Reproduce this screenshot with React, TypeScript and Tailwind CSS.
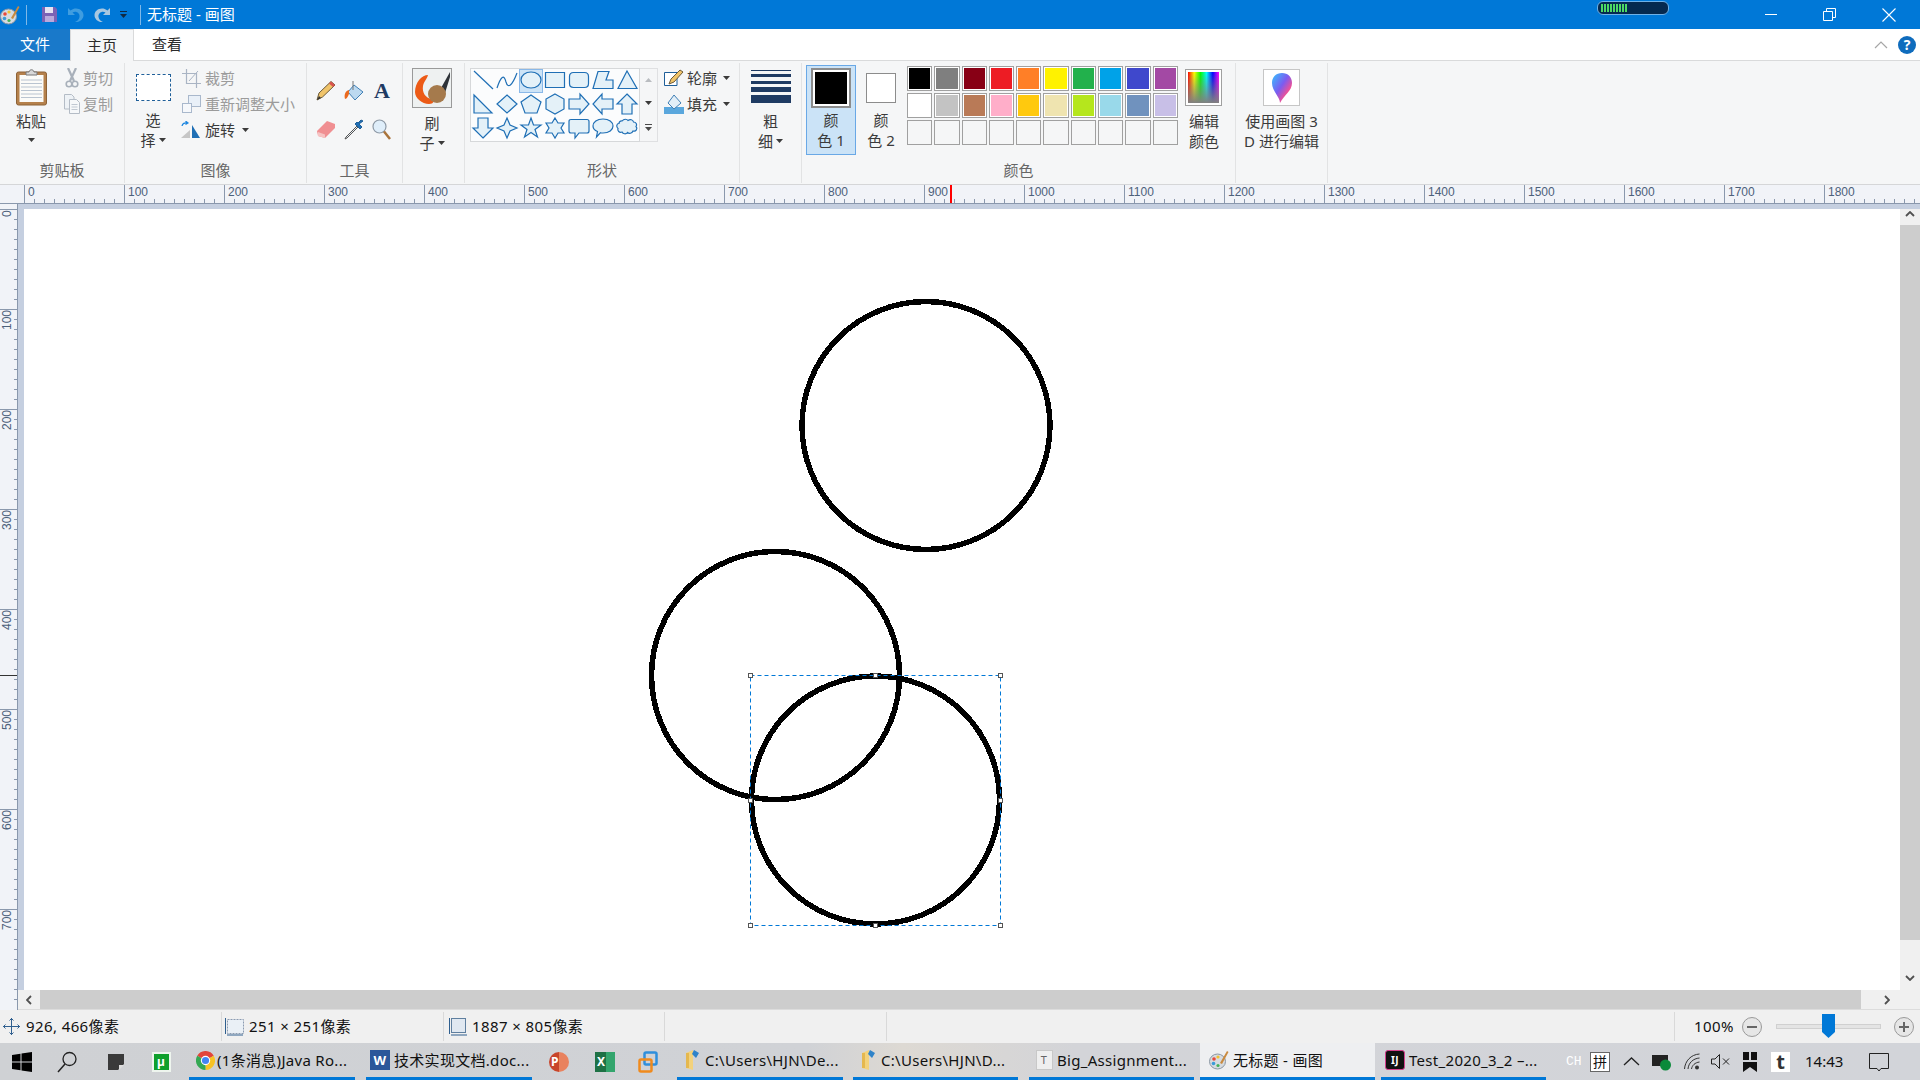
import React from 'react';

const Caret = ({ className = '' }: { className?: string }) => (
	<svg width="7" height="4" viewBox="0 0 7 4" className={className}>
		<path d="M0 0H7L3.5 4Z" fill="#3b3b3b" />
	</svg>
);

const PaintIcon = ({ size = 20 }: { size?: number }) => (
	<svg width={size} height={size} viewBox="0 0 20 20">
		<ellipse cx="8.5" cy="11.5" rx="8" ry="7.5" fill="#d6dbe0" stroke="#8a96a3" />
		<circle cx="5" cy="9" r="1.8" fill="#e8483a" />
		<circle cx="9" cy="7" r="1.6" fill="#f2c230" />
		<circle cx="4.5" cy="13.5" r="1.8" fill="#3b9bd8" />
		<circle cx="9" cy="15.5" r="1.6" fill="#45b05a" />
		<path d="M11 13L18 1L19.5 2L13 14Z" fill="#c98a3f" />
	</svg>
);

const shapes = [
	'M3 3L22 21',
	'M2 20C6 8 9 6 11 14C13 21 17 18 22 5',
	'M22 12C22 16.5 17.5 20 12 20S2 16.5 2 12S6.5 4 12 4S22 7.5 22 12Z',
	'M2.5 4.5H21.5V19.5H2.5Z',
	'M6.5 4.5H17.5Q21.5 4.5 21.5 8.5V15.5Q21.5 19.5 17.5 19.5H6.5Q2.5 19.5 2.5 15.5V8.5Q2.5 4.5 6.5 4.5Z',
	'M2 20.5L7 3.5H18L15 12H22V20.5Z',
	'M12 3L22 20.5H3Z',
	'M3 3L21 21H3Z',
	'M12 3L22 12L12 21L2 12Z',
	'M12 3L22 10L18 21H6L2 10Z',
	'M12 2L21 7V17L12 22L3 17V7Z',
	'M2 7H13V2L22 12L13 22V17H2Z',
	'M22 7H11V2L2 12L11 22V17H22Z',
	'M12 2L22 12H17V22H7V12H2Z',
	'M12 22L22 12H17V2H7V12H2Z',
	'M12 2L15 9L22 12L15 15L12 22L9 15L2 12L9 9Z',
	'M12 2L14.5 9H22L16 13.5L18.5 21L12 16.5L5.5 21L8 13.5L2 9H9.5Z',
	'M12 2L15 7H21L18 12L21 17H15L12 22L9 17H3L6 12L3 7H9Z',
	'M4 3.5H20Q22 3.5 22 5.5V15Q22 17 20 17H12L8 22V17H4Q2 17 2 15V5.5Q2 3.5 4 3.5Z',
	'M12 3C18 3 22 6 22 10S18 17 12 17Q10.5 17 9.5 16.7L5.5 21L6.5 15.5C3.5 14.3 2 12.5 2 10C2 6 6 3 12 3Z',
	'M7 5C9 2.5 12 3 13 4.5C15 3 18 3.5 18.5 6C21 6 22.5 8.5 21 10.5C23 12.5 21 16 18 15C17 17.5 14 18 12.5 16.5C11 18.5 8 18 7 16C4.5 17 2 15 3 12.5C1 11 1.5 7.5 4 7.5C4 6 5.5 4.5 7 5Z',
];

const row1 = ['#000000', '#7f7f7f', '#880015', '#ed1c24', '#ff7f27', '#fff200', '#22b14c', '#00a2e8', '#3f48cc', '#a349a4'];
const row2 = ['#ffffff', '#c3c3c3', '#b97a57', '#ffaec9', '#ffc90e', '#efe4b0', '#b5e61d', '#99d9ea', '#7092be', '#c8bfe7'];
const rulerH = Array.from({ length: 19 }, (_, i) => i * 100);
const rulerV = Array.from({ length: 8 }, (_, i) => i * 100);
const tenTicks = Array.from({ length: 9 }, (_, i) => i);

const Group = ({ width, label, children }: { width: string; label?: string; children: React.ReactNode }) => (
	<div className={`${width} h-[120px] flex flex-col shrink-0 border-r border-[#e2e3e4]`}>
		<div className="h-[97px] flex">{children}</div>
		<div className="h-[21px] text-center text-[15px] leading-[21px] text-[#666666]">{label}</div>
	</div>
);

const BigLabel = ({ a, b, arrow = true }: { a: string; b: string; arrow?: boolean }) => (
	<div className="flex flex-col items-center text-[15px] leading-[20px] text-[#3b3b3b]">
		<span>{a}</span>
		<span className="flex items-center gap-[3px]">
			{b}
			{arrow && <Caret />}
		</span>
	</div>
);

const SmallRow = ({ icon, text, grey = false, arrow = false, gap }: { icon: React.ReactNode; text: string; grey?: boolean; arrow?: boolean; gap: string }) => (
	<div className={`h-[26px] flex items-center text-[15px] ${gap} ${grey ? 'text-[#9b9b9b]' : 'text-[#3b3b3b]'}`}>
		<span className="w-[20px] h-[20px] flex items-center justify-center shrink-0">{icon}</span>
		<span>{text}</span>
		{arrow && <Caret className="ml-[3px]" />}
	</div>
);

const Task = ({ width, ml, pl, gap = 'gap-[4px]', active = false, icon, text }: { width: string; ml: string; pl: string; gap?: string; active?: boolean; icon: React.ReactNode; text: string }) => (
	<div className={`${width} ${ml} ${pl} ${gap} h-full shrink-0 flex items-center border-b-[3px] border-[#0078d7] text-[15px] tracking-[0.3px] text-[#111111] whitespace-nowrap ${active ? 'bg-[#eeeff1]' : ''}`}>
		<span className="w-[20px] h-[20px] shrink-0 flex items-center justify-center">{icon}</span>
		<span>{text}</span>
	</div>
);

const FolderIcon = () => (
	<svg width="20" height="22" viewBox="0 0 20 22">
		<path d="M3 4L10 1V21L3 19Z" fill="#f3d27c" />
		<path d="M3 4H6V19H3Z" fill="#e5b84f" />
		<path d="M11 1L16 4L13 9L9 5Z" fill="#2f83c9" />
	</svg>
);

const App = () => {
	return (
		<div className="w-[1920px] h-[1080px] overflow-hidden flex flex-col bg-white font-['Noto_Sans','Noto_Sans_CJK_SC',sans-serif]">
			{/* title bar */}
			<div className="h-[29px] shrink-0 bg-[#0078d7] flex items-center text-white">
				<span className="w-[20px] flex"><PaintIcon /></span>
				<span className="ml-[6px] w-px h-[20px] bg-[#7fb8e8]" />
				<svg width="17" height="17" viewBox="0 0 17 17" className="ml-[14px]">
					<path d="M1 1H14L16 3V16H1Z" fill="#7b62b5" />
					<path d="M4 1H12V7H4Z" fill="#e6e3f2" />
					<path d="M4 10H13V16H4Z" fill="#b9a9dc" />
				</svg>
				<svg width="17" height="18" viewBox="0 0 17 18" className="ml-[9px]">
					<path d="M1 2V9H8L5.5 6.5C9 4.5 13 7 12.5 11C12.2 13.500 10 15.500 8 16C13 16.500 16.500 13 16.500 9C16.500 3.500 9 0 3.500 4.500Z" fill="#3f9de0" />
				</svg>
				<svg width="17" height="18" viewBox="0 0 17 18" className="ml-[10px]">
					<path d="M16 2V9H9L11.500 6.500C8 4.500 4 7 4.500 11C4.800 13.500 7 15.500 9 16C4 16.500 0.500 13 0.500 9C0.500 3.500 8 0 13.500 4.500Z" fill="#a9c7e0" />
				</svg>
				<svg width="7" height="8" viewBox="0 0 7 8" className="ml-[9px]">
					<path d="M0 0H7V1H0ZM0 3H7L3.500 7Z" fill="#102a43" />
				</svg>
				<span className="ml-[13px] w-px h-[20px] bg-[#7fb8e8]" />
				<span className="ml-[6px] text-[15px]">无标题 - 画图</span>
				<div className="ml-auto relative bottom-[7px] w-[72px] h-[14px] rounded-[6px] bg-[#05294f] border border-[#6fb0e6] flex items-center gap-px pl-[3px]">
					{tenTicks.map((t) => (
						<span key={t} className="w-[2px] h-[8px] bg-[#4cd964]" />
					))}
				</div>
				<span className="ml-[96px] w-[12px] h-px bg-white" />
				<svg width="13" height="13" viewBox="0 0 13 13" className="ml-[46px]">
					<path d="M0.500 3.500H9.500V12.500H0.500ZM3.500 3.500V0.500H12.500V9.500H9.500" fill="none" stroke="white" />
				</svg>
				<svg width="14" height="14" viewBox="0 0 14 14" className="ml-[46px] mr-[24px]">
					<path d="M0.500 0.500L13.500 13.500M13.500 0.500L0.500 13.500" stroke="white" strokeWidth="1.100" />
				</svg>
			</div>

			{/* tabs */}
			<div className="h-[32px] shrink-0 flex items-stretch bg-white border-b border-[#d9dadb] text-[15px] text-[#2b2b2b]">
				<div className="w-[70px] bg-[#1979ca] text-white flex items-center justify-center">文件</div>
				<div className="w-[64px] h-[32px] bg-[#f5f6f7] border-x border-t border-[#d9dadb] flex items-center justify-center">主页</div>
				<div className="ml-[18px] flex items-center">查看</div>
				<div className="ml-auto mr-[4px] flex items-center gap-[10px]">
					<svg width="14" height="8" viewBox="0 0 14 8">
						<path d="M1 7L7 1L13 7" fill="none" stroke="#a6a6a6" strokeWidth="1.200" />
					</svg>
					<span className="w-[18px] h-[18px] rounded-full bg-[#0f6cbd] text-white text-[14px] font-bold leading-[18px] text-center">?</span>
				</div>
			</div>

			{/* ribbon */}
			<div className="h-[124px] shrink-0 bg-[#f5f6f7] border-b border-[#d5d6d8] flex pt-[2px]">
				<Group width="w-[125px]" label="剪贴板">
					<div className="w-[62px] flex flex-col items-center pt-[6px]">
						<svg width="31" height="37" viewBox="0 0 31 37">
							<rect x="0.500" y="3" width="30" height="33" rx="2" fill="#b5814c" stroke="#8d6236" />
							<rect x="3.500" y="6" width="24" height="27" fill="#fbfbf8" />
							<path d="M5 11H26M5 14.500H26M5 18H26M5 21.500H26M5 25H26M5 28.500H26" stroke="#b9c4d0" />
							<path d="M10 6V3H13C13.500 0 17.500 0 18 3H21V6Z" fill="#d8d8d8" stroke="#777777" />
						</svg>
						<div className="mt-[5px] text-[15px] leading-[20px] text-[#3b3b3b]">粘贴</div>
						<Caret className="mt-[7px]" />
					</div>
					<div className="pt-[2px] flex flex-col">
						<SmallRow gap="gap-[1px]" grey text="剪切" icon={
							<svg width="14" height="20" viewBox="0 0 14 20">
								<path d="M3 0L9 13M11 0L5 13" stroke="#a8b0ba" strokeWidth="2.200" />
								<circle cx="4" cy="16" r="2.800" fill="none" stroke="#a8b0ba" strokeWidth="1.600" />
								<circle cx="10" cy="16" r="2.800" fill="none" stroke="#a8b0ba" strokeWidth="1.600" />
							</svg>
						} />
						<SmallRow gap="gap-[1px]" grey text="复制" icon={
							<svg width="16" height="20" viewBox="0 0 16 20">
								<path d="M0.500 0.500H7.500L10 3V15H0.500Z" fill="#eef2f6" stroke="#b4bcc6" />
								<path d="M5.500 5.500H12.500L15.500 8.500V19.500H5.500Z" fill="#f6f8fa" stroke="#b4bcc6" />
								<path d="M7.500 10.500H13.500M7.500 13H13.500M7.500 15.500H13.500" stroke="#c0c8d2" />
							</svg>
						} />
					</div>
				</Group>

				<Group width="w-[182px]" label="图像">
					<div className="w-[56px] flex flex-col items-center pt-[11px]">
						<div className="w-[35px] h-[27px] bg-white border border-dashed border-[#1f5f99]" />
						<div className="mt-[9px]"><BigLabel a="选" b="择" /></div>
					</div>
					<div className="pt-[2px] flex flex-col">
						<SmallRow gap="gap-[4px]" grey text="裁剪" icon={
							<svg width="19" height="19" viewBox="0 0 19 19">
								<path d="M4.500 0V14.500H19M0 4.500H14.500V19" fill="none" stroke="#a9b4c4" strokeWidth="1.200" />
								<path d="M7 12L16 2" stroke="#a9b4c4" />
							</svg>
						} />
						<SmallRow gap="gap-[4px]" grey text="重新调整大小" icon={
							<svg width="19" height="18" viewBox="0 0 19 18">
								<rect x="6.500" y="0.500" width="12" height="11" fill="#e9f0f8" stroke="#a9b8cc" />
								<rect x="0.500" y="8.500" width="9" height="9" fill="#f6f8fb" stroke="#a9b8cc" />
							</svg>
						} />
						<SmallRow gap="gap-[4px]" arrow text="旋转" icon={
							<svg width="20" height="18" viewBox="0 0 20 18">
								<path d="M0 17L9 9V17Z" fill="#c6c6c6" />
								<path d="M11 17V4L19 17Z" fill="#1f6fb5" />
								<path d="M1 5C1.500 2.500 3.500 1.500 6 2M4.500 0L7 2L4.500 3.500" fill="none" stroke="#1c86e0" strokeWidth="1.200" />
							</svg>
						} />
					</div>
				</Group>

				<Group width="w-[96px]" label="工具">
					<div className="pl-[9px] pt-[17px] grid grid-cols-[repeat(3,20px)] grid-rows-[21px_21px] gap-x-[8px] gap-y-[18px] h-fit">
						<svg width="20" height="21" viewBox="0 0 20 21">
							<path d="M1 20L3 13L15 1.500L19 5L6.500 17Z" fill="#f0c46a" stroke="#6b5a3a" />
							<path d="M15 1.500L19 5L17 7L13 3.500Z" fill="#d9534f" />
							<path d="M1 20L3 16L5 18Z" fill="#333333" />
						</svg>
						<svg width="20" height="21" viewBox="0 0 20 21">
							<path d="M10 5L19 12L11 20L4 12Z" fill="#bcd9f0" stroke="#3f7fb5" />
							<path d="M9 1V10" stroke="#777777" />
							<path d="M5 10C1 11 0 15 1 19C3 19 4 16 5 14Z" fill="#ea6a1f" />
						</svg>
						<span className="text-[22px] leading-[21px] font-bold text-[#1f3b63] text-center font-['Liberation_Serif',serif]">A</span>
						<svg width="20" height="21" viewBox="0 0 20 21">
							<path d="M1 12L11 2L19 5L19 9L9 19L2 17Z" fill="#f08f92" />
							<path d="M2 13L9 15.500L9 19L2 17Z" fill="#f6c3c3" />
						</svg>
						<svg width="21" height="21" viewBox="0 0 21 21">
							<path d="M13 7L2 18L1 20L3 19L14 8" fill="#e8eef4" stroke="#555555" />
							<path d="M11 5L16 10L18 8L15 5L19 2L17 1L14 4L13 3Z" fill="#1f6fb5" stroke="#1f5f99" />
						</svg>
						<svg width="19" height="21" viewBox="0 0 19 21">
							<circle cx="7.500" cy="7.500" r="6.500" fill="#dfeefa" stroke="#8d99a6" strokeWidth="1.200" />
							<path d="M12 12.500L18 20" stroke="#a9743b" strokeWidth="2.500" />
						</svg>
					</div>
				</Group>

				<Group width="w-[62px]" label="">
					<div className="w-[62px] pl-[9px] pt-[5px] flex flex-col">
						<svg width="40" height="40" viewBox="0 0 40 40">
							<rect x="0.500" y="0.500" width="39" height="39" fill="#eef1f1" stroke="#9a9a9a" />
							<path d="M16 7C10 7 3 14 3 24C3 30 10 36 17 36C22 36 22 33 20 31C13 30 10 24 11 18C12 13 15 11 16 7Z" fill="#ec5a16" />
							<path d="M29 20L38 4V9L33 25Z" fill="#2d3238" />
							<circle cx="25" cy="26" r="9" fill="#a57a4c" />
						</svg>
						<div className="w-[40px] mt-[5px]"><BigLabel a="刷" b="子" /></div>
					</div>
				</Group>

				<Group width="w-[275px]" label="形状">
					<div className="pl-[5px] pt-[5px] flex h-fit">
						<div className="w-[170px] h-[74px] bg-[#fbfcfd] border border-[#d6d8da] grid grid-cols-7 grid-rows-3">
							{shapes.map((d, i) => (
								<div key={d} className={`flex items-center justify-center ${i === 2 ? 'bg-[#cde4f7] border border-[#8ab8e8]' : ''}`}>
									<svg width="24" height="24" viewBox="0 0 24 24" className="mb-[2px] shrink-0">
										<path d={d} fill={i < 2 ? 'none' : '#e4f1f8'} stroke="#1f6fb5" strokeWidth="1.200" />
									</svg>
								</div>
							))}
						</div>
						<div className="w-[18px] h-[74px] border border-l-0 border-[#dfe0e2] flex flex-col items-center justify-between py-[9px]">
							<svg width="7" height="4" viewBox="0 0 7 4"><path d="M0 4H7L3.500 0Z" fill="#b9bcc0" /></svg>
							<Caret />
							<svg width="7" height="8" viewBox="0 0 7 8"><path d="M0 0H7V1H0ZM0 3H7L3.500 7Z" fill="#4a4a4a" /></svg>
						</div>
						<div className="ml-[6px] mt-[-3px] flex flex-col">
							<SmallRow gap="gap-[3px]" arrow text="轮廓" icon={
								<svg width="20" height="18" viewBox="0 0 20 18">
									<path d="M0.500 3.500H13V16.500H0.500Z" fill="white" stroke="#1f5f99" />
									<path d="M5 15L7 10L16 1L19 3L10 13Z" fill="#f0c46a" stroke="#6b5a3a" />
								</svg>
							} />
							<SmallRow gap="gap-[3px]" arrow text="填充" icon={
								<svg width="20" height="20" viewBox="0 0 20 20">
									<path d="M0 13H20V20H0Z" fill="#5aa7dd" />
									<path d="M10 1L17 9L10 15L4 9Z" fill="#e2eef7" stroke="#3f7fb5" />
								</svg>
							} />
						</div>
					</div>
				</Group>

				<Group width="w-[62px]">
					<div className="w-[62px] flex flex-col items-center pt-[7px]">
						<div className="w-[40px] h-[33px] flex flex-col justify-between">
							<span className="block h-px bg-[#1f3b63]" />
							<span className="block h-[3px] bg-[#1f3b63]" />
							<span className="block h-[3px] bg-[#1f3b63]" />
							<span className="block h-[5px] bg-[#1f3b63]" />
							<span className="block h-[8px] bg-[#1f3b63]" />
						</div>
						<div className="mt-[8px]"><BigLabel a="粗" b="细" /></div>
					</div>
				</Group>

				<Group width="w-[434px]" label="颜色">
					<div className="flex pl-[4px] h-[92px] pt-[2px]">
						<div className="w-[50px] h-[90px] bg-[#cbe3f7] border border-[#69a8e6] flex flex-col items-center pt-[2px]">
							<div className="w-[40px] h-[40px] bg-white border-2 border-[#8c8c8c] p-[2px]">
								<div className="w-full h-full bg-black" />
							</div>
							<div className="mt-[2px]"><BigLabel a="颜" b="色 1" arrow={false} /></div>
						</div>
						<div className="w-[50px] h-[90px] flex flex-col items-center pt-[8px]">
							<div className="w-[30px] h-[30px] bg-white border border-[#8c8c8c]" />
							<div className="mt-[7px]"><BigLabel a="颜" b="色 2" arrow={false} /></div>
						</div>
						<div className="ml-px grid grid-cols-[repeat(10,25.3px)] grid-rows-[repeat(3,25px)] gap-[2px] h-fit pt-[1px]">
							{row1.concat(row2).map((c) => (
								<div key={c} className="border border-[#a0a0a0] bg-white p-[1px]">
									<div className="w-full h-full" style={{ backgroundColor: c }} />
								</div>
							))}
							{row1.map((c) => (
								<div key={c} className="border border-[#a0a0a0] bg-[#f5f6f7]" />
							))}
						</div>
						<div className="w-[50px] ml-[1px] flex flex-col items-center pt-[4px]">
							<div className="w-[37px] h-[37px] border border-[#a0a0a0] p-[2px] bg-white">
								<div className="w-full h-full bg-[linear-gradient(to_bottom,transparent,#808080),linear-gradient(to_right,#ff0000,#ffff00,#00ff00,#00ffff,#0000ff,#ff00ff)]" />
							</div>
							<div className="mt-[5px] text-center text-[15px] leading-[20px] text-[#3b3b3b]">编辑<br />颜色</div>
						</div>
					</div>
				</Group>

				<Group width="w-[92px]">
					<div className="w-[92px] flex flex-col items-center pt-[6px]">
						<div className="w-[37px] h-[37px] bg-white border border-[#c6c6c6] flex items-center justify-center">
							<svg width="22" height="32" viewBox="0 0 22 32">
								<defs>
									<linearGradient id="p3d" x1="0" y1="0" x2="1" y2="1">
										<stop offset="0" stopColor="#32c5ff" />
										<stop offset="0.45" stopColor="#7b5cf0" />
										<stop offset="0.75" stopColor="#ff4f8a" />
										<stop offset="1" stopColor="#ff9a1f" />
									</linearGradient>
								</defs>
								<path d="M11 1C17 1 21 5 21 11C21 19 13 23 9 31C9 25 1 19 1 11C1 5 5 1 11 1Z" fill="url(#p3d)" />
							</svg>
						</div>
						<div className="mt-[5px] text-center text-[15px] leading-[20px] text-[#3b3b3b] whitespace-nowrap">使用画图 3<br />D 进行编辑</div>
					</div>
				</Group>
			</div>

			{/* top ruler */}
			<div className="h-[19px] shrink-0 bg-[#f1f3f8] border-b border-[#8a98ad] flex pl-[24px] relative">
				{rulerH.map((n) => (
					<div key={n} className="w-[100px] shrink-0 border-l border-[#8a98ad] flex flex-col justify-between">
						<span className="pl-[3px] text-[12px] leading-[14px] text-[#4c607a] font-['Liberation_Sans',sans-serif]">{n}</span>
						<div className="flex pl-[9px] gap-[9px]">
							{tenTicks.map((t) => (
								<span key={t} className="w-px h-[4px] bg-[#8a98ad]" />
							))}
						</div>
					</div>
				))}
				<span className="absolute left-[950px] top-0 w-[2px] h-full bg-[#ff0000]" />
			</div>

			{/* work area */}
			<div className="h-[806px] shrink-0 flex">
				<div className="w-[18px] shrink-0 bg-[#f1f3f8] border-r border-[#8a98ad] pt-[5px] relative">
					{rulerV.map((n) => (
						<div key={n} className="h-[100px] border-t border-[#8a98ad] flex pl-[1px]">
							<span className="w-[13px] h-[24px] shrink-0 [writing-mode:vertical-rl] rotate-180 text-right text-[12px] leading-[13px] text-[#4c607a] font-['Liberation_Sans',sans-serif]">{n}</span>
							<div className="flex flex-col pt-[9px] gap-[9px] mr-[-1px]">
								{tenTicks.map((t) => (
									<span key={t} className="w-[4px] h-px bg-[#8a98ad]" />
								))}
							</div>
						</div>
					))}
					<span className="absolute left-0 top-[471px] w-full h-px bg-[#333333]" />
				</div>
				<div className="flex-1 min-w-0 flex flex-col">
					<div className="h-[5px] bg-[#c5cfe0]" />
					<div className="h-[781px] flex">
						<div className="w-[6px] bg-[#c5cfe0]" />
						<div className="flex-1 min-w-0 bg-white overflow-hidden">
							<svg width="1876" height="781" viewBox="0 0 1876 781" className="block">
								<g fill="none" stroke="#000000" strokeWidth="5.500" shapeRendering="crispEdges">
									<circle cx="902" cy="216.500" r="124" />
									<circle cx="751.500" cy="466.500" r="124" />
									<circle cx="851.500" cy="591" r="124" />
								</g>
								<rect x="726.500" y="466.500" width="250" height="250" fill="none" stroke="#0078d7" strokeDasharray="4 3" />
								{[
									[726.5, 466.5], [851.5, 466.5], [976.5, 466.5],
									[726.5, 591.5], [976.5, 591.5],
									[726.5, 716.5], [851.5, 716.5], [976.5, 716.5],
								].map(([x, y]) => (
									<rect key={`${x}-${y}`} x={x - 2} y={y - 2} width="4" height="4" fill="white" stroke="#555555" />
								))}
							</svg>
						</div>
						<div className="w-[20px] bg-[#f0f0f0] flex flex-col">
							<div className="h-[16px] flex items-start justify-center pt-[2px]">
								<svg width="10" height="6" viewBox="0 0 10 6"><path d="M1 5L5 1L9 5" fill="none" stroke="#505050" strokeWidth="1.800" /></svg>
							</div>
							<div className="h-[715px] bg-[#cdcdcd]" />
							<div className="flex-1 flex items-end justify-center pb-[9px]">
								<svg width="10" height="6" viewBox="0 0 10 6"><path d="M1 1L5 5L9 1" fill="none" stroke="#505050" strokeWidth="1.800" /></svg>
							</div>
						</div>
					</div>
					<div className="h-[20px] bg-[#f0f0f0] flex border-b border-[#dcdcdc]">
						<div className="w-[22px] flex items-center justify-center">
							<svg width="6" height="10" viewBox="0 0 6 10"><path d="M5 1L1 5L5 9" fill="none" stroke="#505050" strokeWidth="1.800" /></svg>
						</div>
						<div className="w-[1821px] bg-[#cdcdcd]" />
						<div className="flex-1 flex items-center justify-center pr-[7px]">
							<svg width="6" height="10" viewBox="0 0 6 10"><path d="M1 1L5 5L1 9" fill="none" stroke="#505050" strokeWidth="1.800" /></svg>
						</div>
					</div>
				</div>
			</div>

			{/* status bar */}
			<div className="h-[33px] shrink-0 bg-[#f0f0f0] flex text-[15px] tracking-[0.4px] text-[#111111] whitespace-nowrap">
				<div className="w-[222px] border-r border-[#d9d9d9] my-[2px] flex items-center pl-[3px] gap-[6px]">
					<svg width="17" height="17" viewBox="0 0 17 17">
						<path d="M8.500 0V17M0 8.500H17M6.500 2.500L8.500 0.500L10.500 2.500M6.500 14.500L8.500 16.500L10.500 14.500M2.500 6.500L0.500 8.500L2.500 10.500M14.500 6.500L16.500 8.500L14.500 10.500" fill="none" stroke="#2f5f8f" />
					</svg>
					<span>926, 466像素</span>
				</div>
				<div className="w-[222px] border-r border-[#d9d9d9] my-[2px] flex items-center pl-[3px] gap-[4px]">
					<svg width="20" height="18" viewBox="0 0 20 18">
						<rect x="2.500" y="1.500" width="16" height="14" fill="#eaf0f6" stroke="#8a9bb0" strokeDasharray="2 1" />
						<path d="M0.500 0V16M2 17H18" stroke="#2f5f8f" />
					</svg>
					<span>251 × 251像素</span>
				</div>
				<div className="w-[221px] border-r border-[#d9d9d9] my-[2px] flex items-center pl-[5px] gap-[5px]">
					<svg width="18" height="18" viewBox="0 0 18 18">
						<rect x="2.500" y="0.500" width="14" height="14" fill="#e0e8f1" stroke="#5f7f9f" />
						<path d="M0.500 0V16M2 17H18" stroke="#2f5f8f" />
					</svg>
					<span>1887 × 805像素</span>
				</div>
				<div className="w-[222px] border-r border-[#d9d9d9] my-[2px]" />
				<div className="w-[788px] border-r border-[#d9d9d9] my-[2px]" />
				<div className="flex-1 flex items-center pl-[19px]">
					<span className="w-[40px]">100%</span>
					<span className="ml-[8px] w-[20px] h-[20px] rounded-full border border-[#9a9a9a] bg-[#e6e6e6] flex items-center justify-center">
						<span className="w-[10px] h-[2px] bg-[#666666]" />
					</span>
					<div className="ml-[14px] w-[105px] h-[5px] bg-[#e4e4e4] border border-[#d0d0d0] relative">
						<svg width="13" height="24" viewBox="0 0 13 24" className="absolute left-[45px] top-[-11px]">
							<path d="M0 0H13V18L6.500 24L0 18Z" fill="#0078d7" />
						</svg>
					</div>
					<span className="ml-[13px] w-[20px] h-[20px] rounded-full border border-[#9a9a9a] bg-[#e6e6e6] flex items-center justify-center relative">
						<span className="w-[10px] h-[2px] bg-[#666666]" />
						<span className="absolute w-[2px] h-[10px] bg-[#666666]" />
					</span>
				</div>
			</div>

			{/* taskbar */}
			<div className="h-[37px] shrink-0 flex items-stretch bg-[linear-gradient(to_right,#cfd1d4_0%,#d0d2d6_42%,#ddd9d3_47%,#d3d4d8_56%,#d2d4d9_100%)]">
				<div className="w-[44px] pl-[12px] flex items-center">
					<svg width="20" height="20" viewBox="0 0 20 20">
						<path d="M0 3L8.500 1.800V9.500H0ZM9.500 1.600L20 0V9.500H9.500ZM0 10.500H8.500V18.200L0 17ZM9.500 10.500H20V20L9.500 18.400Z" fill="#000000" />
					</svg>
				</div>
				<div className="w-[46px] flex items-center justify-center">
					<svg width="20" height="22" viewBox="0 0 20 22">
						<circle cx="12.500" cy="8" r="6.500" fill="none" stroke="#222222" strokeWidth="1.300" />
						<path d="M8 13L1 21" stroke="#222222" strokeWidth="1.500" />
					</svg>
				</div>
				<div className="w-[52px] flex items-center justify-center">
					<svg width="16" height="16" viewBox="0 0 16 16"><path d="M0 0H16V10L10 16H0Z" fill="#3a3a3a" /><path d="M11 11H16L11 16Z" fill="#dddddd" /></svg>
				</div>
				<div className="w-[38px] flex items-center justify-center">
					<span className="w-[19px] h-[20px] bg-[#0fa02c] border-2 border-[#eef5ee] text-white text-[12px] font-bold leading-[15px] text-center">µ</span>
				</div>
				<Task width="w-[166px]" ml="ml-[9px]" pl="pl-[6px]" gap="gap-[2px]" text="(1条消息)Java Ro..." icon={
					<svg width="19" height="19" viewBox="0 0 18 18">
						<path d="M9 9L1.200 4.500A9 9 0 0 1 16.800 4.500Z" fill="#e2453a" />
						<path d="M9 9L16.800 4.500A9 9 0 0 1 9 18Z" fill="#f7c325" />
						<path d="M9 9L9 18A9 9 0 0 1 1.200 4.500Z" fill="#34a853" />
						<circle cx="9" cy="9" r="4.400" fill="#ffffff" />
						<circle cx="9" cy="9" r="3.400" fill="#4285f4" />
					</svg>
				} />
				<Task width="w-[166px]" ml="ml-[11px]" pl="pl-[4px]" text="技术实现文档.doc..." icon={
					<span className="w-[20px] h-[20px] bg-[#2b579a] text-white text-[13px] font-bold leading-[20px] text-center">W</span>
				} />
				<div className="w-[54px] flex items-center justify-center">
					<span className="w-[20px] h-[20px] rounded-full bg-[linear-gradient(to_right,#c8452a_50%,#e9825e_50%)] text-white text-[12px] font-bold leading-[20px] pl-[2px]">P</span>
				</div>
				<div className="w-[38px] flex items-center justify-center">
					<span className="w-[20px] h-[20px] bg-[linear-gradient(to_right,#1e7145_55%,#33a56d_55%)] text-white text-[12px] font-bold leading-[20px] pl-[2px]">X</span>
				</div>
				<div className="w-[48px] flex items-center justify-center">
					<svg width="20" height="22" viewBox="0 0 20 22">
						<rect x="6.500" y="1.500" width="12" height="12" rx="1.500" fill="none" stroke="#2f8fdc" strokeWidth="2.500" />
						<rect x="1.500" y="8.500" width="12" height="12" rx="1.500" fill="none" stroke="#f08a1d" strokeWidth="2.500" />
					</svg>
				</div>
				<Task width="w-[166px]" ml="ml-[5px]" pl="pl-[6px]" gap="gap-[2px]" text="C:\Users\HJN\De..." icon={<FolderIcon />} />
				<Task width="w-[165px]" ml="ml-[10px]" pl="pl-[6px]" gap="gap-[2px]" text="C:\Users\HJN\D..." icon={<FolderIcon />} />
				<Task width="w-[165px]" ml="ml-[11px]" pl="pl-[5px]" gap="gap-[3px]" text="Big_Assignment..." icon={
					<span className="w-[17px] h-[20px] bg-[#efefef] border border-[#c8c8c8] text-[#666666] text-[11px] leading-[18px] text-center">T</span>
				} />
				<Task width="w-[175px]" ml="ml-[6px]" pl="pl-[9px]" active text="无标题 - 画图" icon={<PaintIcon />} />
				<Task width="w-[165px]" ml="ml-[6px]" pl="pl-[4px]" text="Test_2020_3_2 –..." icon={
					<span className="w-[20px] h-[20px] rounded-[3px] bg-[#111111] text-white text-[10px] font-bold leading-[18px] text-center border border-[#d43f8d]">IJ</span>
				} />
				<div className="flex items-center text-[#111111]">
					<span className="ml-[20px] w-[16px] text-[13px] text-white font-['Liberation_Mono',monospace]">CH</span>
					<span className="ml-[8px] w-[20px] h-[20px] bg-white border border-[#666666] text-[14px] leading-[18px] text-center">拼</span>
					<svg width="17" height="9" viewBox="0 0 17 9" className="ml-[13px]"><path d="M1 8L8.500 1L16 8" fill="none" stroke="#222222" strokeWidth="1.300" /></svg>
					<svg width="19" height="19" viewBox="0 0 19 19" className="ml-[12px]">
						<rect x="0.500" y="3.500" width="15" height="10" fill="#222222" stroke="#222222" />
						<circle cx="13.500" cy="13" r="5.500" fill="#0a8a3a" />
					</svg>
					<svg width="16" height="17" viewBox="0 0 16 17" className="ml-[13px]">
						<path d="M0.500 16C1 8 7 1.500 15.500 1M4 16C4.500 10 9 5.500 15.500 5M7.500 16C8 12.500 11 9.500 15.500 9" fill="none" stroke="#333333" />
						<circle cx="13" cy="14.500" r="2" fill="#333333" />
					</svg>
					<svg width="19" height="15" viewBox="0 0 19 15" className="ml-[11px]">
						<path d="M0.500 5H4L8.500 0.500V14.500L4 10H0.500Z" fill="none" stroke="#222222" />
						<path d="M12 4.500L18 10.500M18 4.500L12 10.500" stroke="#222222" />
					</svg>
					<svg width="14" height="20" viewBox="0 0 14 20" className="ml-[13px]">
						<path d="M0 0H6V8H0ZM8 0H14V8H8ZM0 10H14V20L7 15L0 20Z" fill="#111111" />
					</svg>
					<span className="ml-[14px] w-[19px] h-[20px] bg-white text-[#333333] text-[20px] font-bold leading-[20px] text-center">t</span>
					<span className="ml-[15px] w-[40px] text-[15px]">14:43</span>
					<svg width="20" height="20" viewBox="0 0 20 20" className="ml-[24px]">
						<path d="M0.500 1.500H19.500V16.500H12L10 19L8 16.500H0.500Z" fill="none" stroke="#222222" />
					</svg>
				</div>
			</div>
		</div>
	);
};

export default App;
